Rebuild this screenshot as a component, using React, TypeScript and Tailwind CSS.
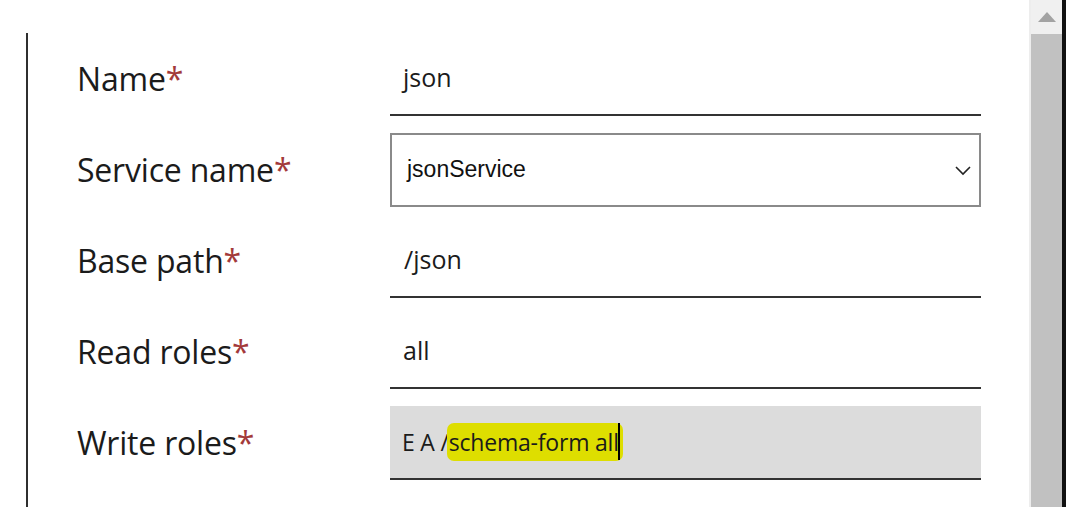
import React from "react";

const Label = ({ text }: { text: string }) => (
  <div className="w-[313px] shrink-0 text-[32px] tracking-[-0.2px] text-[#1b1b1b] leading-none">
    {text}
    <span className="text-[#a33a3a]">*</span>
  </div>
);

export default function App() {
  return (
    <div className="relative h-[507px] w-[1066px] overflow-hidden bg-white font-['Open_Sans',sans-serif]">
      <div className="flex h-full">
        <div className="ml-[26px] mt-[33px] w-[2px] bg-[#2f2f2f]" />
        <div className="flex w-[1001px] flex-col gap-[17px] pl-[49px] pt-[42px]">
          <div className="flex h-[74px] items-center">
            <Label text="Name" />
            <div className="flex h-full w-[591px] items-center border-b-2 border-[#333] pl-[13px] text-[25px] text-[#1b1b1b]">
              json
            </div>
          </div>
          <div className="flex h-[74px] items-center">
            <Label text="Service name" />
            <div className="flex h-full w-[591px] items-center justify-between border-2 border-[#8a8a8a] pl-[15px] pr-[4px] font-['Liberation_Sans',sans-serif] text-[23px] text-[#111]">
              <span className="mt-[-2px]">jsonService</span>
              <svg width="20" height="14" viewBox="0 0 20 14" className="mr-[2px]">
                <path d="M3 4 L10 11 L17 4" fill="none" stroke="#222" strokeWidth="1.6" />
              </svg>
            </div>
          </div>
          <div className="flex h-[74px] items-center">
            <Label text="Base path" />
            <div className="flex h-full w-[591px] items-center border-b-2 border-[#333] pl-[14px] text-[25px] text-[#1b1b1b]">
              /json
            </div>
          </div>
          <div className="flex h-[74px] items-center">
            <Label text="Read roles" />
            <div className="flex h-full w-[591px] items-center border-b-2 border-[#333] pl-[13px] text-[25px] text-[#1b1b1b]">
              all
            </div>
          </div>
          <div className="flex h-[74px] items-center">
            <Label text="Write roles" />
            <div className="flex h-full w-[591px] items-center border-b-2 border-[#333] bg-[#dcdcdc] pl-[12px] text-[23px] tracking-[-0.2px] text-[#1b1b1b]">
              <span>E A /</span>
              <span className="relative -ml-[2px] rounded-[7px] bg-[#dede00] pl-[2px] pr-[4px] leading-[38px]">
                schema-form all
                <span className="absolute right-[3px] top-[0px] h-[37px] w-[2px] bg-black" />
              </span>
            </div>
          </div>
        </div>
      </div>
      <div className="absolute right-0 top-0 flex h-full w-[37px]">
        <div className="h-full w-[2px] bg-[#ededed]" />
        <div className="flex h-full w-[31px] flex-col">
          <div className="flex h-[34px] items-center justify-center bg-[#f0f0f0]">
            <svg width="18" height="10" viewBox="0 0 18 10">
              <path d="M9 0 L18 10 L0 10 Z" fill="#a3a3a3" />
            </svg>
          </div>
          <div className="flex-1 bg-[#c1c1c1]" />
        </div>
        <div className="h-full w-[4px] bg-[#111]" />
      </div>
    </div>
  );
}
